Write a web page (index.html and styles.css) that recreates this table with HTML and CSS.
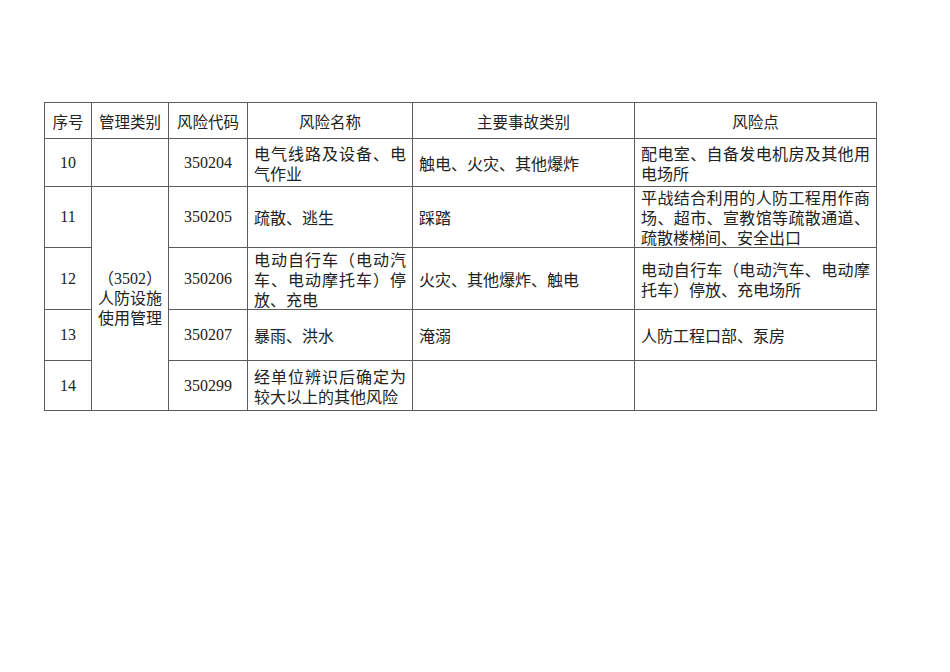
FILE: index.html
```html
<!DOCTYPE html>
<html lang="zh-CN">
<head>
<meta charset="utf-8">
<title>风险清单</title>
<link rel="stylesheet" href="styles.css">
</head>
<body>
<div class="page">
<table class="risk">
<colgroup>
<col class="c1"><col class="c2"><col class="c3"><col class="c4"><col class="c5"><col class="c6">
</colgroup>
<thead>
<tr class="h">
<th>序号</th><th>管理类别</th><th>风险代码</th><th>风险名称</th><th>主要事故类别</th><th>风险点</th>
</tr>
</thead>
<tbody>
<tr class="r10">
<td class="ctr">10</td><td></td><td class="ctr">350204</td><td class="txt">电气线路及设备、电气作业</td><td class="txt">触电、火灾、其他爆炸</td><td class="txt">配电室、自备发电机房及其他用电场所</td>
</tr>
<tr class="r11">
<td class="ctr">11</td><td class="ctr cat" rowspan="4">（3502）人防设施使用管理</td><td class="ctr">350205</td><td class="txt">疏散、逃生</td><td class="txt">踩踏</td><td class="txt">平战结合利用的人防工程用作商场、超市、宣教馆等疏散通道、疏散楼梯间、安全出口</td>
</tr>
<tr class="r12">
<td class="ctr">12</td><td class="ctr">350206</td><td class="txt">电动自行车（电动汽车、电动摩托车）停放、充电</td><td class="txt">火灾、其他爆炸、触电</td><td class="txt">电动自行车（电动汽车、电动摩托车）停放、充电场所</td>
</tr>
<tr class="r13">
<td class="ctr">13</td><td class="ctr">350207</td><td class="txt">暴雨、洪水</td><td class="txt">淹溺</td><td class="txt">人防工程口部、泵房</td>
</tr>
<tr class="r14">
<td class="ctr">14</td><td class="ctr">350299</td><td class="txt">经单位辨识后确定为较大以上的其他风险</td><td class="txt"></td><td class="txt"></td>
</tr>
</tbody>
</table>
</div>
</body>
</html>
```
FILE: styles.css
```css
html, body {
  margin: 0;
  padding: 0;
  background: #ffffff;
}
.page {
  padding: 102px 0 0 44px;
}
.risk {
  border-collapse: collapse;
  table-layout: fixed;
  width: 832px;
  font-family: "Liberation Serif", "Noto Sans CJK SC", serif;
  font-size: 16px;
  line-height: 20px;
  color: #222222;
  text-spacing-trim: space-all;
}
.c1 { width: 47px; }
.c2 { width: 77px; }
.c3 { width: 79px; }
.c4 { width: 165px; }
.c5 { width: 222px; }
.c6 { width: 242px; }
.risk th,
.risk td {
  border: 1px solid #5c5c5c;
  padding: 0 6px;
  vertical-align: middle;
}
.risk th {
  font-weight: normal;
  font-family: "Noto Sans CJK SC", sans-serif;
  font-size: 15.5px;
  text-align: center;
}
.ctr { text-align: center; }
.txt {
  text-align: justify;
  font-family: "Noto Sans CJK SC", sans-serif;
}
.cat { padding: 0 5px; }
.h { height: 36px; }
.r10 { height: 48px; }
.r11 { height: 61px; }
.r12 { height: 62px; }
.r13 { height: 51px; }
.r14 { height: 50px; }
```
